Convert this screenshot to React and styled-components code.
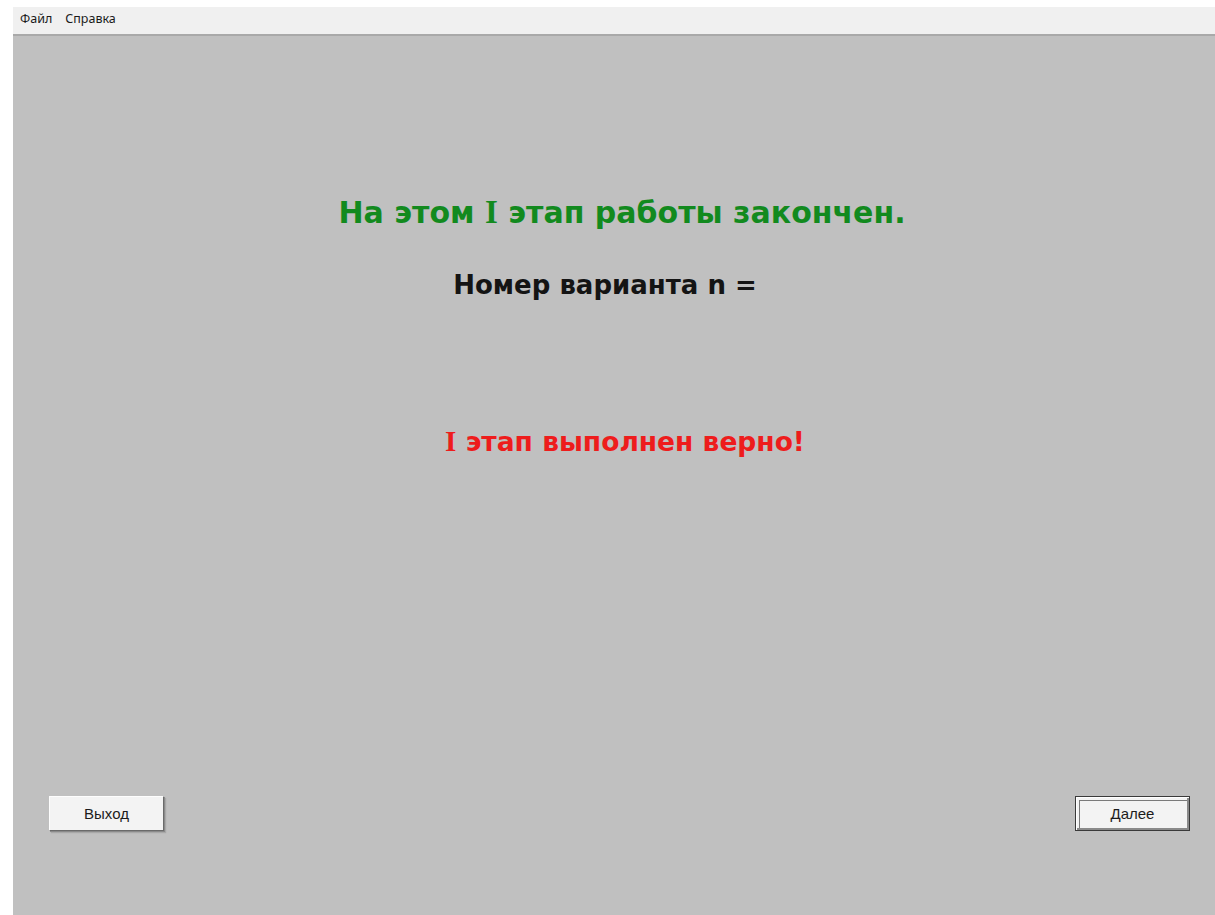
import React from "react";
import styled, { createGlobalStyle } from "styled-components";

const Global = createGlobalStyle`
  html, body { margin: 0; padding: 0; background: #ffffff; }
  body { font-family: "Noto Sans", "DejaVu Sans", sans-serif; }
`;

const Window = styled.div`
  display: flex;
  flex-direction: column;
  height: 915px;
  box-sizing: border-box;
  padding: 7px 0 0 13px;
`;

const MenuBar = styled.nav`
  display: flex;
  align-items: center;
  gap: 13px;
  height: 27px;
  padding: 0 0 0 7px;
  background: #f0f0f0;
  border-bottom: 2px solid #a9a9a9;
  box-shadow: 0 1px 0 #e2e2e2;
`;

const MenuItem = styled.span`
  font-family: "Noto Sans", sans-serif;
  font-size: 12.5px;
  color: #1a1a1a;
  margin-top: -5px;
`;

const Client = styled.main`
  flex: 1;
  display: flex;
  flex-direction: column;
  align-items: center;
  background: #c0c0c0;
`;

const Message = styled.div`
  font-family: "DejaVu Sans", "Verdana", sans-serif;
  font-weight: bold;
  font-size: ${(p) => p.$size}px;
  line-height: 30px;
  color: ${(p) => p.$color};
  margin-top: ${(p) => p.$top}px;
  transform: translateX(${(p) => p.$shift}px);
  white-space: nowrap;
`;

const SerifI = styled.span`
  font-family: "Liberation Serif", serif;
  font-size: 1.1em;
`;

const Spacer = styled.div`
  flex: 1;
`;

const ButtonRow = styled.div`
  align-self: stretch;
  display: flex;
  justify-content: space-between;
  padding: 0 25px 84px 36px;
`;

const Button = styled.button`
  width: 115px;
  height: 35px;
  box-sizing: border-box;
  font-family: "Liberation Sans", sans-serif;
  font-size: 15px;
  color: #1c1c1c;
  background: #f3f3f3;
  border: 1px solid;
  border-color: #fdfdfd #6a6a6a #6a6a6a #fdfdfd;
  box-shadow: 1px 1px 0 #8a8a8a, 2px 2px 1px #a8a8a8;
  padding: 0;
`;

const DefaultButton = styled(Button)`
  border: 1px solid #3a3a3a;
  box-shadow: inset 1px 1px 0 #ffffff, inset -2px -2px 0 #8a8a8a,
    inset 3px 3px 0 #f3f3f3, inset 4px 4px 0 #7a7a7a;
`;

export default function App() {
  return (
    <>
      <Global />
      <Window>
        <MenuBar>
          <MenuItem>Файл</MenuItem>
          <MenuItem>Справка</MenuItem>
        </MenuBar>
        <Client>
          <Message $size={30} $color="#128a1e" $top={161} $shift={8}>
            На этом <SerifI>I</SerifI> этап работы закончен.
          </Message>
          <Message $size={26} $color="#141414" $top={42} $shift={-9}>
            Номер варианта n =
          </Message>
          <Message $size={26.5} $color="#ee1c1c" $top={126} $shift={11}>
            <SerifI>I</SerifI> этап выполнен верно!
          </Message>
          <Spacer />
          <ButtonRow>
            <Button>Выход</Button>
            <DefaultButton>Далее</DefaultButton>
          </ButtonRow>
        </Client>
      </Window>
    </>
  );
}
